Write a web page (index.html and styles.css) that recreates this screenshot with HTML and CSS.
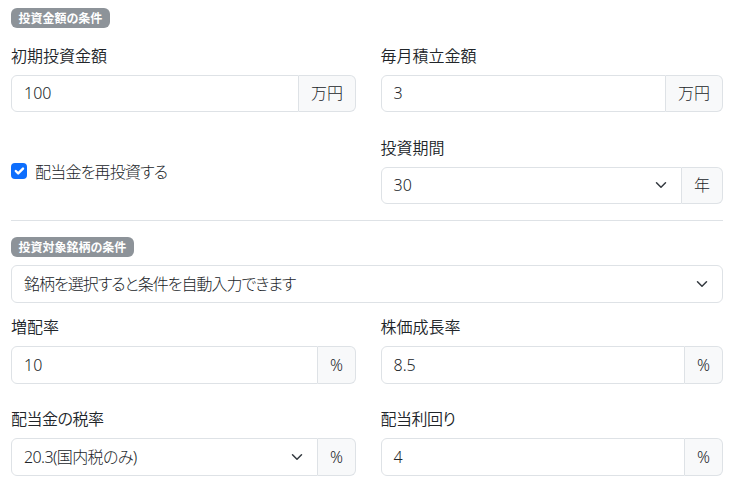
FILE: index.html
```html
<!DOCTYPE html>
<html lang="ja">
<head>
<meta charset="utf-8">
<title>投資条件</title>
<link rel="stylesheet" href="styles.css">
</head>
<body>
<div class="page">
  <section class="section">
    <span class="badge">投資金額の条件</span>
    <div class="grid first">
      <div class="field">
        <label class="label">初期投資金額</label>
        <div class="group">
          <div class="control">100</div>
          <span class="addon">万円</span>
        </div>
      </div>
      <div class="field">
        <label class="label">毎月積立金額</label>
        <div class="group">
          <div class="control">3</div>
          <span class="addon">万円</span>
        </div>
      </div>
      <div class="check-cell">
        <label class="check">
          <span class="box"><svg width="16" height="16" viewBox="0 0 20 20"><path d="m6 10 3 3 6-6" fill="none" stroke="#fff" stroke-width="3" stroke-linecap="round" stroke-linejoin="round"/></svg></span>
          <span class="check-text">配当金を再投資する</span>
        </label>
      </div>
      <div class="field">
        <label class="label">投資期間</label>
        <div class="group">
          <div class="control select">30<svg class="chev" width="16" height="12" viewBox="0 0 16 16"><path d="m2 5 6 6 6-6" fill="none" stroke="#343a40" stroke-width="2" stroke-linecap="round" stroke-linejoin="round"/></svg></div>
          <span class="addon">年</span>
        </div>
      </div>
    </div>
  </section>
  <hr class="divider">
  <section class="section">
    <span class="badge">投資対象銘柄の条件</span>
    <div class="control select full"><span class="tight">銘柄を選択すると条件を自動入力できます</span><svg class="chev" width="16" height="12" viewBox="0 0 16 16"><path d="m2 5 6 6 6-6" fill="none" stroke="#343a40" stroke-width="2" stroke-linecap="round" stroke-linejoin="round"/></svg></div>
    <div class="grid second">
      <div class="field">
        <label class="label">増配率</label>
        <div class="group">
          <div class="control">10</div>
          <span class="addon">%</span>
        </div>
      </div>
      <div class="field">
        <label class="label">株価成長率</label>
        <div class="group">
          <div class="control">8.5</div>
          <span class="addon">%</span>
        </div>
      </div>
      <div class="field">
        <label class="label kana">配当金の税率</label>
        <div class="group">
          <div class="control select"><span class="semi">20.3(国内税のみ)</span><svg class="chev" width="16" height="12" viewBox="0 0 16 16"><path d="m2 5 6 6 6-6" fill="none" stroke="#343a40" stroke-width="2" stroke-linecap="round" stroke-linejoin="round"/></svg></div>
          <span class="addon">%</span>
        </div>
      </div>
      <div class="field">
        <label class="label kana">配当利回り</label>
        <div class="group">
          <div class="control">4</div>
          <span class="addon">%</span>
        </div>
      </div>
    </div>
  </section>
</div>
</body>
</html>
```

FILE: styles.css
```css
* { box-sizing: border-box; }
html, body { margin: 0; background: #fff; }
body {
  font-family: "Noto Sans", "Noto Sans CJK JP", sans-serif;
  font-size: 16px;
  line-height: 24px;
  color: #212529;
  font-weight: 300;
  font-feature-settings: "palt";
}
.page {
  padding: 8px 6px 0 11px;
}
.section { display: flex; flex-direction: column; align-items: flex-start; }
.badge {
  display: inline-block;
  background: #8d9399;
  color: #fff;
  font-family: "Noto Sans CJK JP", sans-serif;
  font-size: 12px;
  font-weight: 700;
  line-height: 12px;
  padding: 4px 7.5px;
  border-radius: 6px;
  height: 20px;
}
.grid {
  display: grid;
  grid-template-columns: 345px 1fr;
  column-gap: 24.5px;
  row-gap: 22.5px;
  width: 100%;
}
.grid.first { margin-top: 14.5px; }
.grid.second { margin-top: 11.5px; }
.field { display: flex; flex-direction: column; }
.label {
  display: block;
  margin-bottom: 8px;
  font-family: "Noto Sans CJK JP", sans-serif;
  font-weight: 350;
}
.label.kana { letter-spacing: -0.5px; }
.group { display: flex; height: 37.5px; }
.control {
  flex: 1;
  display: flex;
  align-items: center;
  position: relative;
  height: 37.5px;
  padding: 0 12px;
  border: 1px solid #dee2e6;
  border-radius: 6px 0 0 6px;
  background: #fff;
}
.control.select { padding-right: 36px; }
.control.full {
  flex: none;
  width: 100%;
  border-radius: 6px;
  margin-top: 8px;
}
.tight { letter-spacing: -1px; }
.semi { letter-spacing: -0.6px; }
.chev {
  position: absolute;
  right: 12px;
  top: 50%;
  margin-top: -6px;
}
.addon {
  display: flex;
  align-items: center;
  padding: 0 12px;
  background: #f8f9fa;
  border: 1px solid #dee2e6;
  border-left: none;
  border-radius: 0 6px 6px 0;
}
.check-cell {
  display: flex;
  align-items: center;
  padding-top: 3px;
}
.check {
  display: flex;
  align-items: center;
  gap: 8px;
  font-family: "Noto Sans CJK JP", sans-serif;
}
.check-text { letter-spacing: -0.8px; }
.box {
  width: 16px;
  height: 16px;
  background: #0d6efd;
  border-radius: 4px;
  display: flex;
}
.divider {
  border: none;
  border-top: 1px solid #dee2e6;
  margin: 16px 0;
  height: 0;
  width: 100%;
}
```
